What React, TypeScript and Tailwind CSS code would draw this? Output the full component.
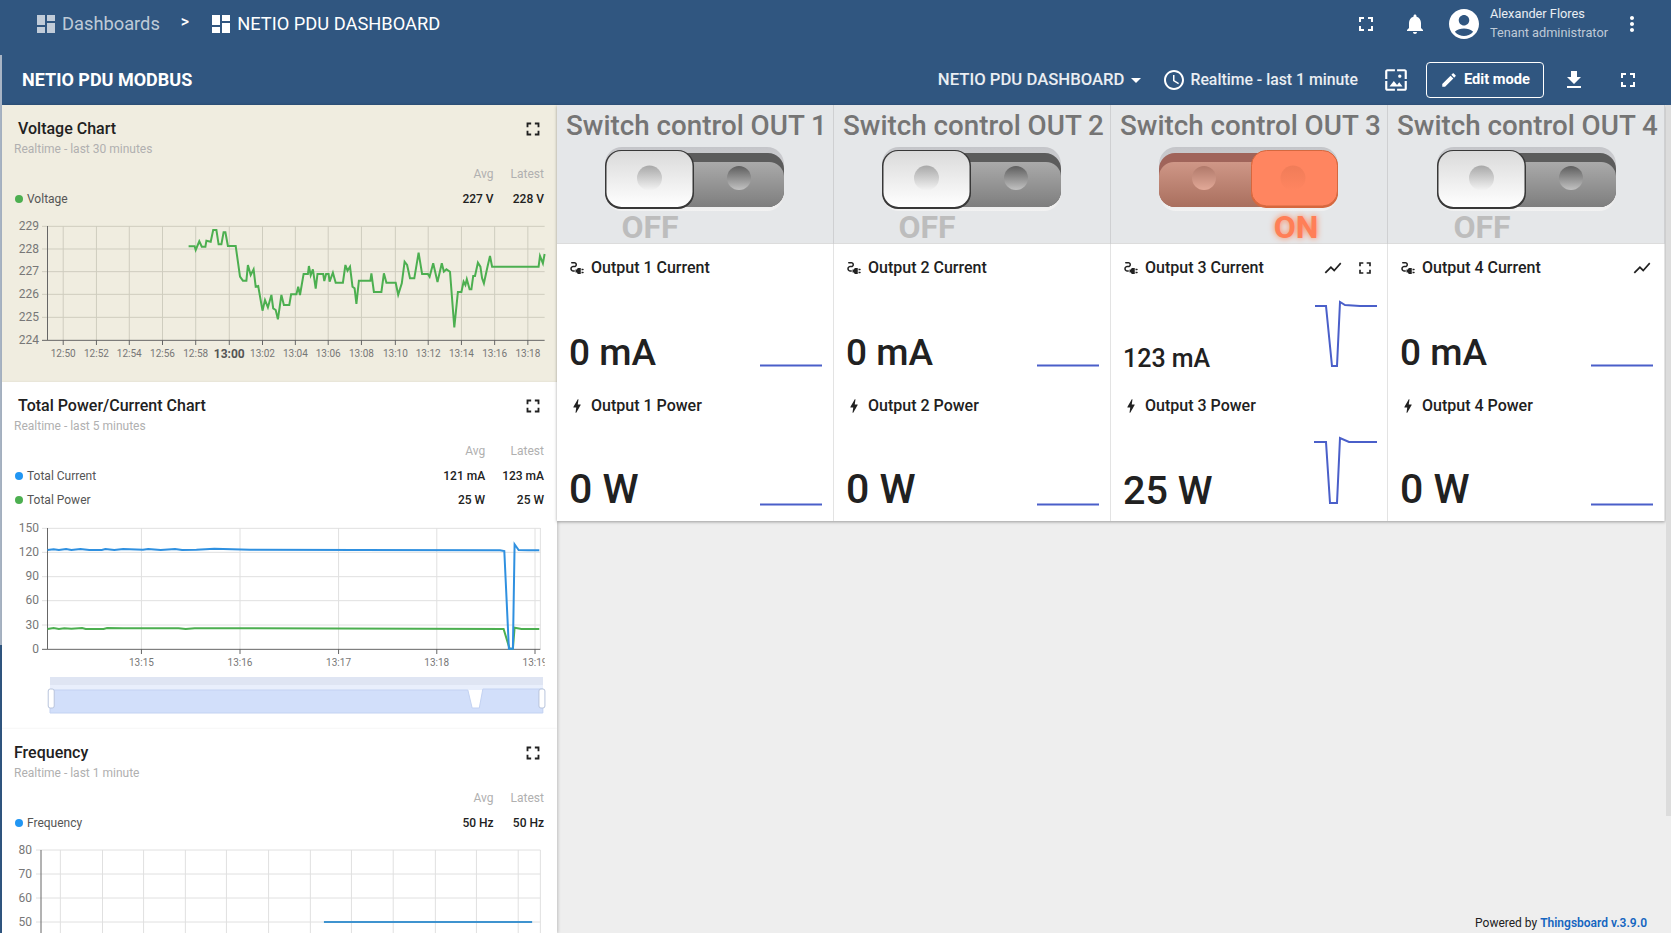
import { Fragment, type ReactNode } from "react";

const ICONS = {
  dashboard: "M3 13h8V3H3v10zm0 8h8v-6H3v6zm10 0h8V11h-8v10zm0-18v6h8V3h-8z",
  fullscreen: "M7 14H5v5h5v-2H7v-3zm-2-4h2V7h3V5H5v5zm12 7h-3v2h5v-5h-2v3zM14 5v2h3v3h2V5h-5z",
  bell: "M12 22c1.1 0 2-.9 2-2h-4c0 1.1.89 2 2 2zm6-6v-5c0-3.07-1.64-5.64-4.5-6.32V4c0-.83-.67-1.5-1.5-1.5s-1.5.67-1.5 1.5v.68C7.63 5.36 6 7.92 6 11v5l-2 2v1h16v-1l-2-2z",
  account: "M12 2C6.48 2 2 6.48 2 12s4.48 10 10 10 10-4.48 10-10S17.52 2 12 2zm0 4c1.93 0 3.5 1.57 3.5 3.5S13.93 13 12 13s-3.5-1.57-3.5-3.5S10.07 6 12 6zm0 14c-2.03 0-4.43-.82-6.14-2.88C7.55 15.8 9.68 15 12 15s4.45.8 6.14 2.12C16.43 19.18 14.03 20 12 20z",
  more: "M12 8c1.1 0 2-.9 2-2s-.9-2-2-2-2 .9-2 2 .9 2 2 2zm0 2c-1.1 0-2 .9-2 2s.9 2 2 2 2-.9 2-2-.9-2-2-2zm0 6c-1.1 0-2 .9-2 2s.9 2 2 2 2-.9 2-2-.9-2-2-2z",
  clock: "M11.99 2C6.47 2 2 6.48 2 12s4.47 10 9.99 10C17.52 22 22 17.52 22 12S17.52 2 11.99 2zM12 20c-4.42 0-8-3.58-8-8s3.58-8 8-8 8 3.58 8 8-3.58 8-8 8zm.5-13H11v6l5.25 3.15.75-1.23-4.5-2.67z",
  edit: "M3 17.25V21h3.75L17.81 9.94l-3.75-3.75L3 17.25zM20.71 7.04c.39-.39.39-1.02 0-1.41l-2.34-2.34c-.39-.39-1.02-.39-1.41 0l-1.83 1.83 3.75 3.75 1.83-1.83z",
  download: "M19 9h-4V3H9v6H5l7 7 7-7zM5 18v2h14v-2H5z",
  chart: "M3.5 18.49l6-6.01 4 4L22 6.92l-1.41-1.41-7.09 7.97-4-4L2 16.99z",
  caret: "M7 10l5 5 5-5z",
  wallpaper: "M4 4h7V2H4c-1.1 0-2 .9-2 2v7h2V4zm6 9l-4 5h12l-3-4-2.03 2.71L10 13zm7-4.5c0-.83-.67-1.5-1.5-1.5S14 7.67 14 8.5s.67 1.5 1.5 1.5S17 9.33 17 8.5zM20 2h-7v2h7v7h2V4c0-1.1-.9-2-2-2zm0 18h-7v2h7c1.1 0 2-.9 2-2v-7h-2v7zM4 13H2v7c0 1.1.9 2 2 2h7v-2H4v-7z",
  plug: "M21 14c0-.55-.45-1-1-1h-2v2h2c.55 0 1-.45 1-1zm-1 3h-2v2h2c.55 0 1-.45 1-1s-.45-1-1-1zm-8-3h-2v4h2c0 1.1.9 2 2 2h3v-8h-3c-1.1 0-2 .9-2 2zM5 13c0-1.1.9-2 2-2h1.5c1.93 0 3.5-1.57 3.5-3.5S10.43 4 8.5 4H5c-.55 0-1 .45-1 1s.45 1 1 1h3.5c.83 0 1.5.67 1.5 1.5S9.33 9 8.5 9H7c-2.21 0-4 1.79-4 4s1.79 4 4 4h2v-2H7c-1.1 0-2-.9-2-2z",
  bolt: "M11 21h-1l1-7H7.5c-.58 0-.57-.32-.38-.66.19-.34.05-.08.07-.12C8.48 10.94 10.42 7.54 13 3h1l-1 7h3.5c.49 0 .56.33.47.51l-.07.15C12.96 17.55 11 21 11 21z",
};

function Icon({ name, className }: { name: keyof typeof ICONS; className: string }) {
  return (
    <svg viewBox="0 0 24 24" fill="currentColor" className={className}>
      <path d={ICONS[name]} />
    </svg>
  );
}

// chart points were read off a 2.8x / 3x crop of the page, so map them back here
const vx = (z: number) => z / 2.8 - 2;
const line = (pts: number[][], top: number) =>
  pts.map(([x, y]) => `${vx(x).toFixed(1)},${(y / 3 - top).toFixed(1)}`).join(" ");

const VOLTAGE = [
  [528,739],[545,739],[548,750],[558,724],[565,740],[575,740],[578,722],[590,725],[597,690],[606,690],[612,733],[620,733],[626,697],[631,697],[638,738],[660,738],[672,830],[680,842],[690,842],[694,795],[702,825],[710,808],[716,860],[723,858],[735,932],[742,900],[750,922],[760,885],[765,925],[772,930],[778,958],[788,885],[795,915],[810,915],[815,883],[830,883],[835,860],[840,885],[850,822],[862,822],[865,798],[870,826],[876,808],[884,866],[889,822],[905,822],[908,843],[913,822],[920,822],[923,845],[932,818],[940,848],[960,848],[967,795],[973,812],[980,800],[987,860],[993,865],[998,912],[1005,842],[1037,842],[1040,820],[1047,876],[1068,876],[1075,820],[1082,848],[1108,848],[1115,884],[1125,850],[1133,785],[1140,795],[1148,835],[1160,835],[1172,758],[1182,822],[1198,822],[1203,830],[1213,790],[1225,846],[1237,790],[1243,815],[1250,808],[1260,815],[1272,982],[1282,876],[1292,876],[1298,845],[1303,855],[1307,838],[1315,868],[1320,868],[1325,828],[1330,828],[1338,788],[1345,800],[1350,835],[1355,850],[1365,800],[1372,768],[1378,800],[1508,800],[1512,768],[1520,790],[1525,762],
];
const CURRENT = [
  [133,510],[150,508],[165,510],[185,507],[200,510],[225,507],[250,510],[285,510],[295,507],[320,510],[345,507],[400,509],[415,507],[450,510],[490,507],[510,510],[550,509],[600,506],[700,509],[1000,510],[1400,511],[1412,513],[1425,806],[1436,806],[1441,493],[1452,510],[1480,511],[1510,511],
];
const POWER = [
  [133,747],[150,744],[165,747],[180,745],[200,746],[230,744],[240,747],[290,747],[300,744],[345,745],[500,745],[520,747],[545,745],[700,745],[1410,747],[1427,806],[1436,806],[1441,743],[1460,747],[1510,747],
];

function VoltagePlot() {
  const top = 211;
  const xs = [177,270,362,455,548,642,735,827,919,1012,1107,1199,1292,1385,1478];
  const labels = ["12:50","12:52","12:54","12:56","12:58","13:00","13:02","13:04","13:06","13:08","13:10","13:12","13:14","13:16","13:18"];
  const ys = [679,747,815,883,952,1021];
  return (
    <svg width={555} height={171} className="block">
      {xs.map((x) => (
        <line key={x} x1={vx(x)} x2={vx(x)} y1={15} y2={129} stroke="#cfcdbf" />
      ))}
      {ys.map((y, i) => (
        <g key={y}>
          <line x1={40} x2={vx(1525)} y1={y / 3 - top} y2={y / 3 - top} stroke={i === 5 ? "#666" : "#cfcdbf"} />
          <text x={37} y={y / 3 - top + 3.5} textAnchor="end" fontSize={12} fill="#777">{229 - i}</text>
        </g>
      ))}
      <line x1={45.5} x2={45.5} y1={15} y2={129} stroke="#666" />
      {xs.map((x, i) => (
        <g key={x}>
          <line x1={vx(x)} x2={vx(x)} y1={129} y2={134} stroke="#666" />
          <text x={vx(x)} y={i === 5 ? 147 : 146} textAnchor="middle" fontSize={i === 5 ? 12 : 10} fontWeight={i === 5 ? 700 : 400} fill={i === 5 ? "#555" : "#777"}>{labels[i]}</text>
        </g>
      ))}
      <polyline points={line(VOLTAGE, top)} fill="none" stroke="#4caf50" strokeWidth={2} />
    </svg>
  );
}

function TotalPlot() {
  const top = -380 + 513;
  const xs = [396,672,948,1223,1498];
  const ys = [445,517,590,662,735,808];
  return (
    <svg width={555} height={215} className="block">
      <defs>
        <clipPath id="total-clip"><rect x={0} y={0} width={vx(1525)} height={215} /></clipPath>
      </defs>
      {[...xs, 1513].map((x) => (
        <line key={x} x1={vx(x)} x2={vx(x)} y1={15} y2={136} stroke="#e0e0e0" />
      ))}
      {ys.map((y, i) => (
        <g key={y}>
          <line x1={40} x2={vx(1513)} y1={y / 3 - top} y2={y / 3 - top} stroke={i === 5 ? "#666" : "#e0e0e0"} />
          <text x={37} y={y / 3 - top + 3.5} textAnchor="end" fontSize={12} fill="#777">{150 - i * 30}</text>
        </g>
      ))}
      <line x1={45.5} x2={45.5} y1={15} y2={136} stroke="#666" />
      <g clipPath="url(#total-clip)">
        {xs.map((x, i) => (
          <g key={x}>
            <line x1={vx(x)} x2={vx(x)} y1={136} y2={141} stroke="#666" />
            <text x={vx(x)} y={153} textAnchor="middle" fontSize={10} fill="#777">{`13:${15 + i}`}</text>
          </g>
        ))}
      </g>
      <polyline points={line(POWER, top)} fill="none" stroke="#4caf50" strokeWidth={2} />
      <polyline points={line(CURRENT, top)} fill="none" stroke="#2f90e0" strokeWidth={2} />
      <rect x={vx(140)} y={164} width={493} height={8} fill="#dfe5f3" />
      <rect x={vx(140)} y={172} width={493} height={5} fill="#e9effc" />
      <path d={`M${vx(140)} 177H${vx(1310)}L${vx(1322)} 195H${vx(1342)}L${vx(1352)} 176H${vx(1520)}V200H${vx(140)}Z`} fill="#d2dffa" stroke="#c3d2f2" />
      <rect x={vx(135)} y={176} width={6} height={19} rx={2} fill="#fff" stroke="#b8c4dc" />
      <rect x={vx(1509)} y={176} width={6} height={19} rx={2} fill="#fff" stroke="#b8c4dc" />
    </svg>
  );
}

function FrequencyPlot() {
  const xs = [169,287,402,519,634,752,869,984,1101,1219,1334,1451,1513];
  const ys = [390,462,534,606];
  const top = 835 - 720;
  return (
    <svg width={555} height={98} className="block">
      {xs.map((x) => (
        <line key={x} x1={vx(x)} x2={vx(x)} y1={15} y2={98} stroke="#e0e0e0" />
      ))}
      {ys.map((y, i) => (
        <g key={y}>
          <line x1={34} x2={vx(1513)} y1={y / 3 - top} y2={y / 3 - top} stroke="#e0e0e0" />
          <text x={30} y={y / 3 - top + 3.5} textAnchor="end" fontSize={12} fill="#777">{80 - i * 10}</text>
        </g>
      ))}
      <line x1={39} x2={39} y1={15} y2={98} stroke="#666" />
      <line x1={vx(907)} x2={vx(1490)} y1={87} y2={87} stroke="#3f93cf" strokeWidth={2} />
    </svg>
  );
}

type LegendRow = { color: string; label: string; avg: string; latest: string };

function ChartCard({
  title,
  sub,
  rows,
  titleInset,
  className,
  children,
}: {
  title: string;
  sub: string;
  rows: LegendRow[];
  titleInset?: boolean;
  className: string;
  children: ReactNode;
}) {
  return (
    <section className={`shrink-0 overflow-hidden shadow-[0_1px_3px_rgba(0,0,0,0.18)] ${className}`}>
      <div className="relative h-[57px] pt-[14px] pl-3">
        <h3 className={`h-5 text-base font-medium leading-5 text-[#212121] ${titleInset ? "pl-1" : ""}`}>{title}</h3>
        <p className="text-xs leading-5 text-[#b0b0b0]">{sub}</p>
        <Icon name="fullscreen" className="absolute right-[13px] top-[13px] h-[22px] w-[22px] text-[#212121]" />
      </div>
      <div className="grid grid-cols-[1fr_auto_auto] gap-x-[17px] pl-[13px] pr-[13px] text-xs">
        <span className="h-[24.5px]" />
        <span className="text-right leading-[24.5px] text-[#b0b0b0]">Avg</span>
        <span className="text-right leading-[24.5px] text-[#b0b0b0]">Latest</span>
        {rows.map((r) => (
          <Fragment key={r.label}>
            <span className="flex h-[24.5px] items-center gap-1 text-[#555]">
              <i className="h-2 w-2 rounded-full" style={{ backgroundColor: r.color }} />
              {r.label}
            </span>
            <span className="text-right font-medium leading-[24.5px] text-[#212121]">{r.avg}</span>
            <span className="text-right font-medium leading-[24.5px] text-[#212121]">{r.latest}</span>
          </Fragment>
        ))}
      </div>
      {children}
    </section>
  );
}

function ToggleArt({ on }: { on: boolean }) {
  const p = on ? "on" : "off";
  return (
    <svg width={180} height={64} className="block">
      <defs>
        <linearGradient id={`${p}-outer`} x1="0" x2="0" y1="0" y2="1">
          <stop offset="0" stopColor="#c4c5c9" />
          <stop offset="0.5" stopColor="#d8d8da" />
          <stop offset="1" stopColor="#f2f2f2" />
        </linearGradient>
        <linearGradient id={`${p}-body`} x1="0" x2="0" y1="0" y2="1">
          <stop offset="0" stopColor={on ? "#cf9787" : "#aaaaaa"} />
          <stop offset="1" stopColor={on ? "#a96f5e" : "#7e7e7e"} />
        </linearGradient>
        <linearGradient id={`${p}-thumb`} x1="0" x2="0" y1="0" y2="1">
          <stop offset="0" stopColor={on ? "#ff8560" : "#dadada"} />
          <stop offset="1" stopColor={on ? "#ff8560" : "#ffffff"} />
        </linearGradient>
        <linearGradient id={`${p}-hole`} x1="0" x2="0" y1="0" y2="1">
          <stop offset="0" stopColor={on ? "#b0796a" : "#5e5e5e"} />
          <stop offset="1" stopColor={on ? "#e2a998" : "#c2c2c2"} />
        </linearGradient>
        <linearGradient id={`${p}-hole2`} x1="0" x2="0" y1="0" y2="1">
          <stop offset="0" stopColor={on ? "#f07c58" : "#a8a8a8"} />
          <stop offset="1" stopColor={on ? "#ff8560" : "#f4f4f4"} />
        </linearGradient>
      </defs>
      <rect x={0} y={0} width={179} height={64} rx={17} fill={`url(#${p}-outer)`} />
      <rect x={0} y={6} width={179} height={54} rx={16} fill={on ? "#a0645a" : "#5c5c5c"} />
      <path d="M0 29a15 15 0 0 1 15-14h149a15 15 0 0 1 15 14v15a16 16 0 0 1-16 16H16A16 16 0 0 1 0 44Z" fill={`url(#${p}-body)`} />
      {on ? (
        <>
          <circle cx={45} cy={31} r={12} fill={`url(#${p}-hole)`} />
          <rect x={92} y={4} width={87} height={57} rx={15} fill="#d5683f" />
          <rect x={92.5} y={3.5} width={86} height={55.5} rx={15} fill={`url(#${p}-thumb)`} stroke="#d5683f" />
          <circle cx={134} cy={31} r={12.5} fill={`url(#${p}-hole2)`} />
        </>
      ) : (
        <>
          <circle cx={134} cy={31} r={12} fill={`url(#${p}-hole)`} />
          <rect x={0} y={3} width={89} height={59} rx={16} fill="#383838" />
          <rect x={1.5} y={4} width={86} height={56} rx={15} fill={`url(#${p}-thumb)`} />
          <circle cx={44.5} cy={31} r={12.5} fill={`url(#${p}-hole2)`} />
        </>
      )}
    </svg>
  );
}

function SwitchCard({ n, on }: { n: number; on?: boolean }) {
  const last = n === 4;
  return (
    <div className="h-[139px] border-r border-[#cfd0d2] bg-[#e5e7e9] shadow-[inset_0_-1px_0_#dcdcdc]">
      <div className="h-[42px] whitespace-nowrap pl-[9px] pt-[3px] text-[27.75px] font-medium leading-[36px] text-[#757575]">
        Switch control OUT {n}
      </div>
      <div className={last ? "ml-[49px]" : "ml-[48px]"}>
        <ToggleArt on={!!on} />
      </div>
      <div
        className={
          on
            ? "ml-[145px] w-[80px] text-center text-[32px] font-bold leading-[32px] text-[#ff7f57] [text-shadow:0_0_6px_#ff7f50]"
            : `w-[80px] text-center text-[32px] font-bold leading-[32px] text-[#bdbdbd] ${last ? "ml-[54px]" : "ml-[53px]"}`
        }
      >
        {on ? "ON" : "OFF"}
      </div>
    </div>
  );
}

function Spark({ pts }: { pts?: string }) {
  return (
    <svg width={64} height={72} className="mb-[3px] block shrink-0">
      <polyline points={pts ?? "0,69.5 62,69.5"} fill="none" stroke="#4a5fc9" strokeWidth={2} />
    </svg>
  );
}

const sparkCurrent = "1,10 12,10 18,70 23,70 26,6 31,9 46,10 63,10";
const sparkPower = "0,7 12,7 16,68 23,68 26,3 35,7 63,7";

function ValueCard({
  icon,
  title,
  value,
  size,
  spark,
  chartBtn,
  fullBtn,
  h,
}: {
  icon: "plug" | "bolt";
  title: string;
  value: string;
  size: string;
  spark?: string;
  chartBtn?: boolean;
  fullBtn?: boolean;
  h: string;
}) {
  return (
    <div className={`relative flex flex-col justify-between border-r border-[#e3e3e3] bg-white ${h}`}>
      <div className="flex h-5 items-center pl-[11px] pt-[24px] text-[#212121]">
        <Icon name={icon} className="h-[18px] w-[18px] shrink-0" />
        <span className="ml-[5px] text-base font-medium leading-5">{title}</span>
      </div>
      {chartBtn && <Icon name="chart" className={`absolute top-[14px] h-5 w-5 text-[#212121] ${fullBtn ? "right-[44px]" : "right-[12px]"}`} />}
      {fullBtn && <Icon name="fullscreen" className="absolute right-[12px] top-[14px] h-5 w-5 text-[#212121]" />}
      <div className="flex items-end justify-between pb-[11px] pl-3 pr-[9px]">
        <span className={`font-medium leading-none text-[#212121] ${size}`}>{value}</span>
        <Spark pts={spark} />
      </div>
    </div>
  );
}

export default function App() {
  return (
    <div className="flex h-screen overflow-hidden bg-[#305680] font-[Roboto,sans-serif]">
      {/* thin sidebar remainder on the left edge */}
      <div className="w-[2px] shrink-0 pt-[55px]">
        <div className="h-[590px] bg-[#a9b5c5]" />
      </div>

      <div className="flex min-w-0 flex-1 flex-col">
        {/* top bar */}
        <header className="flex h-[52px] shrink-0 items-center pb-[4px] pl-[32px] pr-[27px] text-white">
          <Icon name="dashboard" className="h-6 w-6 text-white/70" />
          <span className="ml-[4px] text-[18.3px] text-white/70">Dashboards</span>
          <span className="ml-[21px] mb-1 text-base font-medium">&gt;</span>
          <Icon name="dashboard" className="ml-[20px] h-6 w-6" />
          <span className="ml-[4px] text-[18.3px]">NETIO PDU DASHBOARD</span>
          <div className="ml-auto flex items-center">
            <Icon name="fullscreen" className="h-6 w-6" />
            <Icon name="bell" className="ml-[25px] h-6 w-6" />
            <Icon name="account" className="ml-[19px] h-9 w-9" />
            <div className="mb-[2px] ml-[8px] flex flex-col text-[12.75px] leading-[19px]">
              <span className="text-white/90">Alexander Flores</span>
              <span className="text-white/70">Tenant administrator</span>
            </div>
            <Icon name="more" className="ml-[12px] h-6 w-6" />
          </div>
        </header>

        {/* dashboard toolbar */}
        <div className="flex h-[53px] shrink-0 items-center pl-5 pr-[31px] pt-[2px] text-white">
          <span className="text-lg font-bold">NETIO PDU MODBUS</span>
          <div className="ml-auto flex items-center">
            <span className="text-[16.7px] font-medium text-white/90">NETIO PDU DASHBOARD</span>
            <Icon name="caret" className="h-6 w-6" />
            <Icon name="clock" className="ml-[14px] h-6 w-6" />
            <span className="ml-[4px] text-[15.8px] font-medium text-white/90">Realtime - last 1 minute</span>
            <Icon name="wallpaper" className="ml-[25px] h-[26px] w-[26px]" />
            <button className="ml-[17px] flex h-[36px] w-[118px] items-center justify-center gap-[6px] rounded-[4px] border border-white text-[14.7px] font-bold">
              <Icon name="edit" className="h-[18px] w-[18px]" />
              Edit mode
            </button>
            <Icon name="download" className="ml-[18px] h-6 w-6" />
            <Icon name="fullscreen" className="ml-[30px] h-6 w-6" />
          </div>
        </div>

        <main className="flex min-h-0 flex-1 bg-[#eeeeee]">
          {/* left chart column */}
          <div className="flex w-[555px] shrink-0 flex-col overflow-hidden bg-white shadow-[1px_0_3px_rgba(0,0,0,0.2)]">
            <ChartCard
              title="Voltage Chart"
              sub="Realtime - last 30 minutes"
              titleInset
              className="h-[277px] bg-[#f0ede0]"
              rows={[{ color: "#4caf50", label: "Voltage", avg: "227 V", latest: "228 V" }]}
            >
              <VoltagePlot />
            </ChartCard>
            <ChartCard
              title="Total Power/Current Chart"
              sub="Realtime - last 5 minutes"
              titleInset
              className="h-[347px] bg-white"
              rows={[
                { color: "#2196f3", label: "Total Current", avg: "121 mA", latest: "123 mA" },
                { color: "#4caf50", label: "Total Power", avg: "25 W", latest: "25 W" },
              ]}
            >
              <div className="mt-[0.5px]">
                <TotalPlot />
              </div>
            </ChartCard>
            <ChartCard
              title="Frequency"
              sub="Realtime - last 1 minute"
              className="h-[300px] bg-white"
              rows={[{ color: "#2196f3", label: "Frequency", avg: "50 Hz", latest: "50 Hz" }]}
            >
              <FrequencyPlot />
            </ChartCard>
          </div>

          {/* right grid */}
          <div className="flex min-w-0 flex-1 flex-col">
            <div className="grid grid-cols-4 shadow-[0_1px_3px_rgba(0,0,0,0.35)]">
              <SwitchCard n={1} />
              <SwitchCard n={2} />
              <SwitchCard n={3} on />
              <SwitchCard n={4} />
              <ValueCard h="h-[138px]" icon="plug" title="Output 1 Current" value="0 mA" size="text-[37px]" />
              <ValueCard h="h-[138px]" icon="plug" title="Output 2 Current" value="0 mA" size="text-[37px]" />
              <ValueCard h="h-[138px]" icon="plug" title="Output 3 Current" value="123 mA" size="text-[25px]" spark={sparkCurrent} chartBtn fullBtn />
              <ValueCard h="h-[138px]" icon="plug" title="Output 4 Current" value="0 mA" size="text-[37px]" chartBtn />
              <ValueCard h="h-[139px]" icon="bolt" title="Output 1 Power" value="0 W" size="text-[41px]" />
              <ValueCard h="h-[139px]" icon="bolt" title="Output 2 Power" value="0 W" size="text-[41px]" />
              <ValueCard h="h-[139px]" icon="bolt" title="Output 3 Power" value="25 W" size="text-[39.5px]" spark={sparkPower} />
              <ValueCard h="h-[139px]" icon="bolt" title="Output 4 Power" value="0 W" size="text-[41px]" />
            </div>
            <footer className="mt-auto pb-[2px] pr-[18px] text-right text-xs leading-4 text-[#212121]">
              Powered by <span className="font-semibold text-[#1565c0]">Thingsboard v.3.9.0</span>
            </footer>
          </div>

          {/* page scrollbar */}
          <div className="w-[6px] shrink-0 pl-px">
            <div className="h-[711px] bg-[#dcdcdc]" />
          </div>
        </main>
      </div>
    </div>
  );
}
